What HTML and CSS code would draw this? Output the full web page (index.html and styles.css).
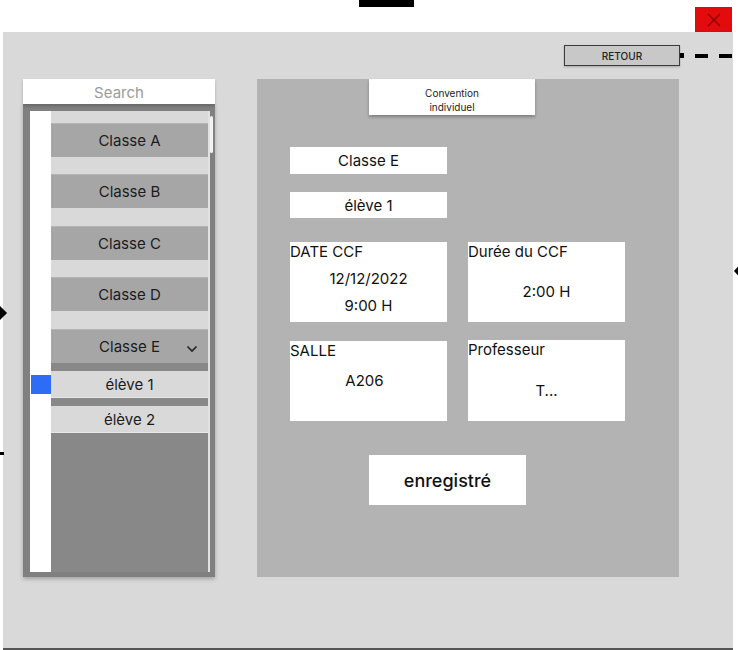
FILE: index.html
```html
<!DOCTYPE html>
<html lang="fr">
<head>
<meta charset="utf-8">
<title>Convention individuel</title>
<link rel="stylesheet" href="styles.css">
</head>
<body>
<div class="topbar">
  <div class="tab"></div>
  <div class="close">
    <svg width="14" height="14" viewBox="0 0 14 14"><path d="M1 1 L13 13 M13 1 L1 13" stroke="#8a0000" stroke-width="1.3" fill="none"/></svg>
  </div>
</div>
<div class="frame">
  <div class="marker-left"></div>
  <div class="marker-left-small"></div>
  <div class="marker-right"></div>
  <div class="toprow">
    <div class="retour">RETOUR</div>
    <svg class="connector" width="58" height="8" viewBox="0 0 58 8">
      <rect x="0" y="1" width="4" height="5" fill="#000"/>
      <rect x="15" y="2" width="13" height="4" fill="#000"/>
      <rect x="39" y="2" width="13" height="4" fill="#000"/>
    </svg>
  </div>
  <div class="content">
    <div class="left">
      <div class="search">Search</div>
      <div class="list">
        <div class="gutter"><div class="sel"></div></div>
        <div class="items">
          <div class="gap first"></div>
          <div class="cls">Classe A</div>
          <div class="gap"></div>
          <div class="cls">Classe B</div>
          <div class="gap g18"></div>
          <div class="cls">Classe C</div>
          <div class="gap"></div>
          <div class="cls">Classe D</div>
          <div class="gap g18"></div>
          <div class="cls open">Classe E
            <svg class="chev" width="12" height="8" viewBox="0 0 12 8"><path d="M1.5 1.5 L6 6 L10.5 1.5" stroke="#222" stroke-width="1.6" fill="none"/></svg>
          </div>
          <div class="dark"></div>
          <div class="stu">élève 1</div>
          <div class="dark"></div>
          <div class="stu">élève 2</div>
        </div>
        <div class="track"></div>
        <div class="thumb"></div>
      </div>
    </div>
    <div class="right">
      <div class="title">Convention<br>individuel</div>
      <div class="field f1">Classe E</div>
      <div class="field f2">élève 1</div>
      <div class="cards">
        <div class="card">
          <div class="label">DATE CCF</div>
          <div class="val v-date">12/12/2022<br>9:00 H</div>
        </div>
        <div class="card">
          <div class="label">Durée du CCF</div>
          <div class="val v-dur">2:00 H</div>
        </div>
        <div class="card">
          <div class="label">SALLE</div>
          <div class="val v-salle">A206</div>
        </div>
        <div class="card up">
          <div class="label">Professeur</div>
          <div class="val v-prof">T...</div>
        </div>
      </div>
      <div class="save">enregistré</div>
    </div>
  </div>
</div>
</body>
</html>
```
FILE: styles.css
```css
* { box-sizing: border-box; }
html, body { margin: 0; padding: 0; }
body {
  width: 738px;
  height: 650px;
  overflow: hidden;
  background: #fff;
  font-family: Inter, "Noto Sans", "Liberation Sans", sans-serif;
  color: #111;
}
.topbar {
  height: 32px;
  display: flex;
  align-items: flex-start;
}
.tab {
  margin-left: 359px;
  width: 55px;
  height: 7px;
  background: #000;
}
.close {
  margin-left: auto;
  margin-right: 6px;
  margin-top: 7px;
  width: 37px;
  height: 25px;
  background: #e30b0b;
  border: 1px solid #4a4a4a;
  display: flex;
  align-items: center;
  justify-content: center;
}
.frame {
  position: relative;
  margin-left: 3px;
  width: 730px;
  height: 618px;
  background: #d9d9d9;
  border-bottom: 2px solid #555;
  padding-top: 13px;
}
.marker-left {
  position: absolute;
  left: -8px;
  top: 276px;
  width: 10px;
  height: 10px;
  background: #000;
  transform: rotate(45deg);
}
.marker-left-small {
  position: absolute;
  left: -3px;
  top: 420px;
  width: 4px;
  height: 3px;
  background: #000;
}
.marker-right {
  position: absolute;
  left: 731px;
  top: 231px;
  width: 0;
  height: 0;
  border-top: 8px solid transparent;
  border-bottom: 8px solid transparent;
  border-right: 7px solid #000;
}
.toprow {
  position: relative;
  display: flex;
  justify-content: flex-end;
  padding-right: 53px;
}
.retour {
  width: 116px;
  height: 21px;
  background: #c8c8c8;
  border: 1px solid #3c3c3c;
  box-shadow: 0 1px 2px rgba(0,0,0,0.25);
  font-size: 10px;
  font-weight: 500;
  color: #222;
  display: flex;
  align-items: center;
  justify-content: center;
}
.connector {
  position: absolute;
  left: 677px;
  top: 7px;
}
.content {
  display: flex;
  gap: 42px;
  margin-top: 13px;
  padding-left: 20px;
}
.left {
  width: 192px;
  display: flex;
  flex-direction: column;
}
.search {
  height: 25px;
  padding-top: 2px;
  background: #fff;
  color: #9a9a9a;
  font-size: 15px;
  display: flex;
  align-items: center;
  justify-content: center;
  box-shadow: 0 2px 3px rgba(0,0,0,0.2);
  position: relative;
  z-index: 1;
}
.list {
  position: relative;
  height: 473px;
  background: #808080;
  padding: 7px 5px 5px 7px;
  display: flex;
  box-shadow: 0 2px 4px rgba(0,0,0,0.25);
}
.gutter {
  width: 21px;
  background: #fff;
  padding-top: 264px;
}
.sel {
  margin-left: 1px;
  width: 20px;
  height: 19px;
  background: #2f6cf5;
}
.items {
  width: 157px;
  background: #888;
  display: flex;
  flex-direction: column;
}
.track {
  width: 2px;
  background: #e2e2e2;
}
.thumb {
  position: absolute;
  left: 187px;
  top: 12px;
  width: 3px;
  height: 37px;
  background: #f2f2f2;
  border-radius: 2px;
}
.gap {
  height: 17px;
  background: #d9d9d9;
}
.gap.first { height: 12px; }
.gap.g18 { height: 18px; }
.cls {
  position: relative;
  height: 34px;
  background: #a6a6a6;
  border-top: 1px solid #b4b4b4;
  font-size: 15px;
  color: #1c1c1c;
  display: flex;
  align-items: center;
  justify-content: center;
}
.chev {
  position: absolute;
  right: 10px;
  top: 15px;
}
.dark {
  height: 8px;
  background: #888;
}
.stu {
  height: 27px;
  background: #d9d9d9;
  border-bottom: 1px solid #e6e6e6;
  font-size: 15px;
  color: #1c1c1c;
  display: flex;
  align-items: center;
  justify-content: center;
}
.right {
  width: 422px;
  height: 498px;
  background: #b3b3b3;
  display: flex;
  flex-direction: column;
}
.title {
  margin-left: 112px;
  width: 166px;
  height: 36px;
  background: #fff;
  box-shadow: 0 2px 3px rgba(0,0,0,0.3);
  font-size: 10px;
  line-height: 13.5px;
  color: #222;
  text-align: center;
  padding-top: 8px;
}
.field {
  margin-left: 33px;
  width: 157px;
  background: #fff;
  font-size: 15px;
  display: flex;
  align-items: center;
  justify-content: center;
}
.f1 { margin-top: 32px; height: 27px; }
.f2 { margin-top: 18px; height: 26px; }
.cards {
  margin-top: 24px;
  margin-left: 33px;
  display: grid;
  grid-template-columns: 157px 157px;
  grid-auto-rows: 80px;
  column-gap: 21px;
  row-gap: 19px;
}
.card {
  background: #fff;
  font-size: 15px;
}
.card.up { margin-top: -1px; }
.label {
  line-height: 20px;
}
.val {
  text-align: center;
  line-height: 27px;
}
.v-date { margin-top: 3px; }
.v-dur { margin-top: 16px; }
.v-salle { margin-top: 6px; padding-right: 8px; }
.v-prof { margin-top: 17px; }
.save {
  margin-top: 34px;
  margin-left: 112px;
  width: 157px;
  height: 50px;
  background: #fff;
  font-size: 18px;
  font-weight: 500;
  display: flex;
  align-items: center;
  justify-content: center;
}
```
